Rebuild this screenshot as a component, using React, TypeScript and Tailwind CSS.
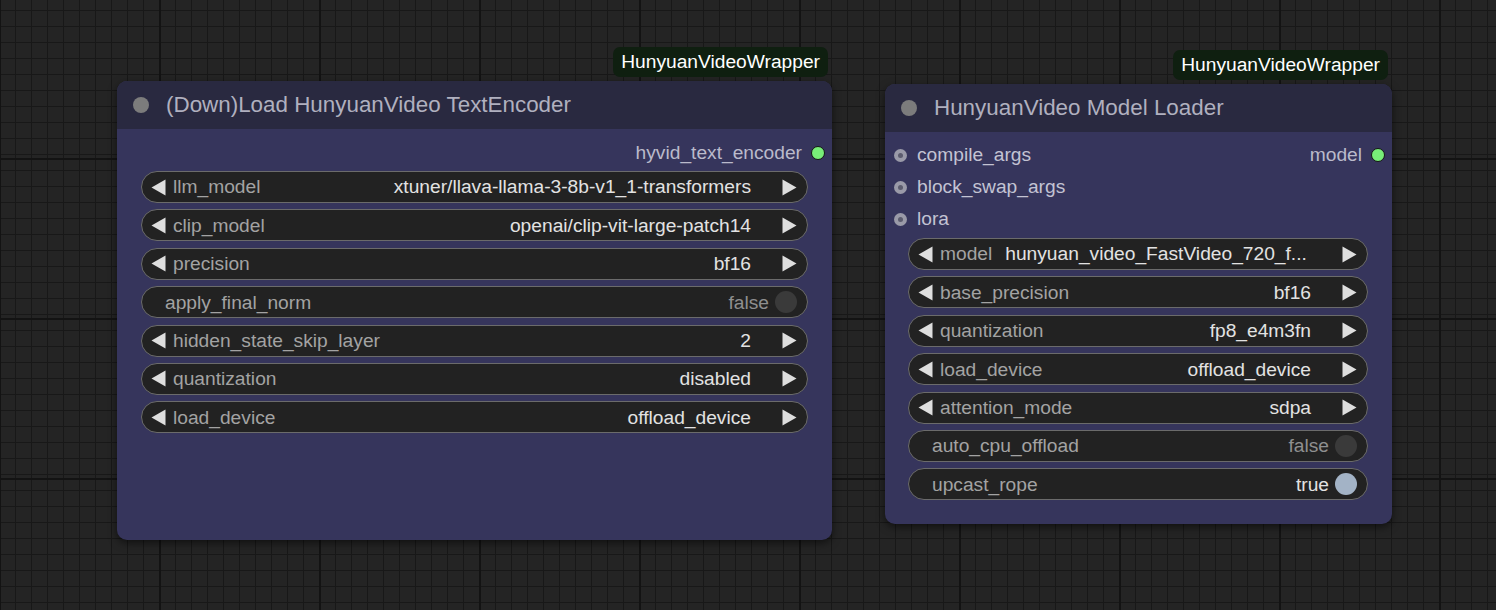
import React from 'react';

type Widget =
  | { kind: 'combo'; label: string; value: string; left?: boolean }
  | { kind: 'toggle'; label: string; value: boolean };

const FONT = "font-['Liberation_Sans',Arial,sans-serif]";

function ArrowLeft() {
  return (
    <svg width="15" height="17" viewBox="0 0 15 17" className="shrink-0">
      <polygon points="14.5,0.5 14.5,16.5 0.5,8.5" fill="#dedede" />
    </svg>
  );
}

function ArrowRight() {
  return (
    <svg width="15" height="17" viewBox="0 0 15 17" className="shrink-0">
      <polygon points="0.5,0.5 0.5,16.5 14.5,8.5" fill="#dedede" />
    </svg>
  );
}

function WidgetRow({ w }: { w: Widget }) {
  if (w.kind === 'toggle') {
    return (
      <div className="flex h-[32px] items-center rounded-full border-[1.5px] border-[#6b6b6b] bg-[#222222] pl-[23px] pr-[10px]">
        <span className="text-[#a3a3a3]">{w.label}</span>
        <span className={w.value ? 'ml-auto text-[#e2e2e2]' : 'ml-auto text-[#8f8f8f]'}>
          {w.value ? 'true' : 'false'}
        </span>
        <span
          className={
            w.value
              ? 'ml-[6px] h-[22px] w-[22px] shrink-0 rounded-full bg-[#a3b3c6]'
              : 'ml-[6px] h-[22px] w-[22px] shrink-0 rounded-full bg-[#3a3a3a]'
          }
        />
      </div>
    );
  }
  return (
    <div className="flex h-[32px] items-center rounded-full border-[1.5px] border-[#6b6b6b] bg-[#222222] pl-[9px] pr-[10px]">
      <ArrowLeft />
      <span className="ml-[7px] shrink-0 text-[#a3a3a3]">{w.label}</span>
      {w.left ? (
        <span className="ml-[13px] whitespace-nowrap text-[#e2e2e2]">{w.value}</span>
      ) : (
        <span className="ml-auto whitespace-nowrap text-[#e2e2e2]">{w.value}</span>
      )}
      <span className={w.left ? 'ml-auto pl-[28px]' : 'ml-[31px]'}>
        <ArrowRight />
      </span>
    </div>
  );
}

function InputDot() {
  return (
    <span className="flex h-[13px] w-[13px] shrink-0 items-center justify-center rounded-full bg-[#9a9aa8]">
      <span className="h-[5px] w-[5px] rounded-full bg-[#5c5c6e]" />
    </span>
  );
}

function OutputDot() {
  return <span className="h-[14px] w-[14px] shrink-0 rounded-full border-[1.5px] border-[#151515] bg-[#78ee78]" />;
}

function Badge() {
  return (
    <div className="absolute right-[4px] top-[-34px] flex h-[30px] items-center rounded-[7px] bg-[#0f1f10] px-[8px] text-[19.2px] text-white">
      HunyuanVideoWrapper
    </div>
  );
}

function Header({ title }: { title: string }) {
  return (
    <div className="flex h-[48px] items-center rounded-t-[10px] bg-[#292940] pl-[16px]">
      <span className="h-[16px] w-[16px] rounded-full bg-[#7c7c7c]" />
      <span className="ml-[17px] text-[22.4px] text-[#b0b0bf]">{title}</span>
    </div>
  );
}

const encoderWidgets: Widget[] = [
  { kind: 'combo', label: 'llm_model', value: 'xtuner/llava-llama-3-8b-v1_1-transformers' },
  { kind: 'combo', label: 'clip_model', value: 'openai/clip-vit-large-patch14' },
  { kind: 'combo', label: 'precision', value: 'bf16' },
  { kind: 'toggle', label: 'apply_final_norm', value: false },
  { kind: 'combo', label: 'hidden_state_skip_layer', value: '2' },
  { kind: 'combo', label: 'quantization', value: 'disabled' },
  { kind: 'combo', label: 'load_device', value: 'offload_device' },
];

const loaderWidgets: Widget[] = [
  { kind: 'combo', label: 'model', value: 'hunyuan_video_FastVideo_720_f...', left: true },
  { kind: 'combo', label: 'base_precision', value: 'bf16' },
  { kind: 'combo', label: 'quantization', value: 'fp8_e4m3fn' },
  { kind: 'combo', label: 'load_device', value: 'offload_device' },
  { kind: 'combo', label: 'attention_mode', value: 'sdpa' },
  { kind: 'toggle', label: 'auto_cpu_offload', value: false },
  { kind: 'toggle', label: 'upcast_rope', value: true },
];

export default function App() {
  return (
    <div
      className={`relative h-[610px] w-[1496px] overflow-hidden bg-[#242424] ${FONT} text-[19.2px] leading-none bg-[linear-gradient(90deg,#131313_2px,transparent_2px),linear-gradient(#131313_2px,transparent_2px),linear-gradient(90deg,#181818_1px,transparent_1px),linear-gradient(#181818_1px,transparent_1px)] bg-size-[160px_160px,160px_160px,16px_16px,16px_16px] bg-position-[-1px_-2px,-1px_-2px,15px_10px,15px_10px]`}
    >
      {/* Text encoder node */}
      <div className="absolute left-[117px] top-[81px] flex h-[459px] w-[715px] flex-col rounded-[10px] bg-[#36355c] shadow-[0_3px_8px_rgba(0,0,0,0.55)]">
        <Badge />
        <Header title="(Down)Load HunyuanVideo TextEncoder" />
        <div className="flex flex-col pt-[8px]">
          <div className="flex h-[32px] items-center justify-end gap-[9px] pr-[7px] text-[#babacb]">
            <span>hyvid_text_encoder</span>
            <OutputDot />
          </div>
          <div className="mt-[2px] flex flex-col gap-[6.4px] px-[24px]">
            {encoderWidgets.map((w) => (
              <WidgetRow key={w.label} w={w} />
            ))}
          </div>
        </div>
      </div>

      {/* Model loader node */}
      <div className="absolute left-[885px] top-[84px] flex h-[440px] w-[507px] flex-col rounded-[10px] bg-[#36355c] shadow-[0_3px_8px_rgba(0,0,0,0.55)]">
        <Badge />
        <Header title="HunyuanVideo Model Loader" />
        <div className="flex flex-col pt-[7px]">
          <div className="flex h-[32px] items-center pl-[9px] pr-[7px] text-[#c3c3d3]">
            <InputDot />
            <span className="ml-[10px]">compile_args</span>
            <span className="ml-auto mr-[9px] text-[#babacb]">model</span>
            <OutputDot />
          </div>
          <div className="flex h-[32px] items-center pl-[9px] text-[#c3c3d3]">
            <InputDot />
            <span className="ml-[10px]">block_swap_args</span>
          </div>
          <div className="flex h-[32px] items-center pl-[9px] text-[#c3c3d3]">
            <InputDot />
            <span className="ml-[10px]">lora</span>
          </div>
          <div className="mt-[3px] flex flex-col gap-[6.4px] pl-[23px] pr-[24px]">
            {loaderWidgets.map((w) => (
              <WidgetRow key={w.label} w={w} />
            ))}
          </div>
        </div>
      </div>
    </div>
  );
}
